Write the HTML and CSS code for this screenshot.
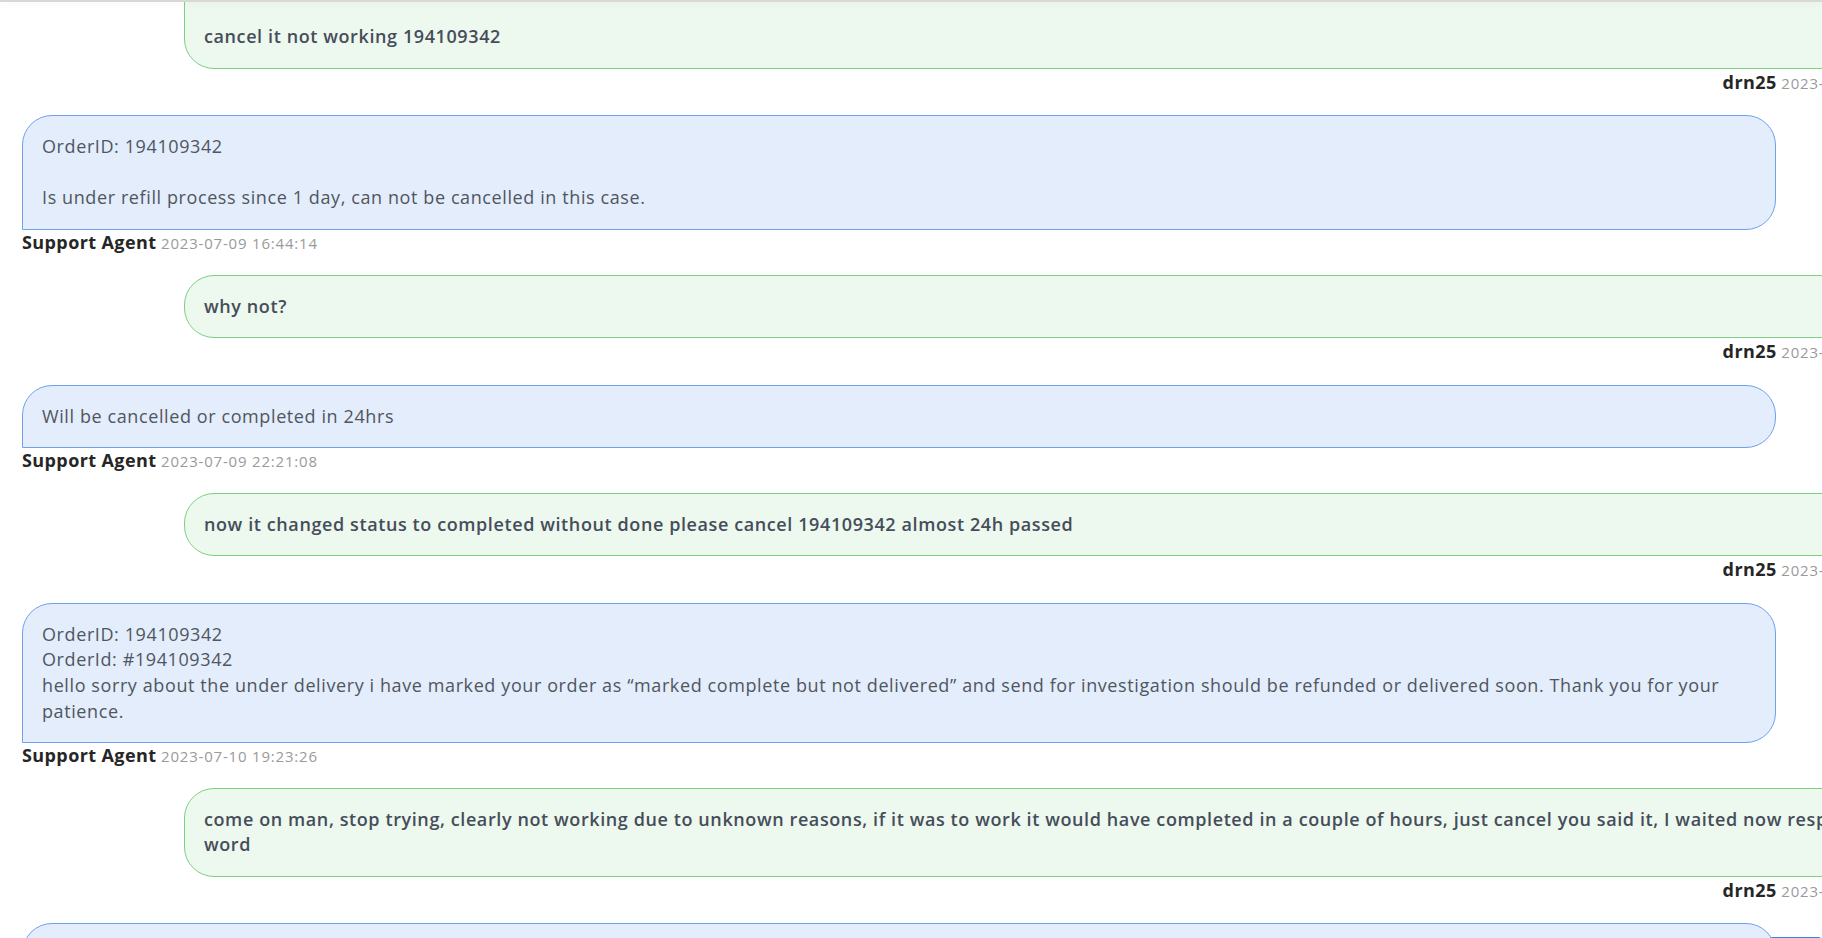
FILE: index.html
```html
<!DOCTYPE html>
<html lang="en">
<head>
<meta charset="utf-8">
<title>Ticket conversation</title>
<link rel="stylesheet" href="styles.css">
</head>
<body>
<div class="topbar"></div>
<main class="chat">
  <div class="msg out">
    <div class="bubble"><br><br>cancel it not working 194109342</div>
    <div class="meta"><b>drn25</b> <span>2023-07-09 16:30:12</span></div>
  </div>
  <div class="msg in">
    <div class="bubble">OrderID: 194109342<br><br>Is under refill process since 1 day, can not be cancelled in this case.</div>
    <div class="meta"><b>Support Agent</b> <span>2023-07-09 16:44:14</span></div>
  </div>
  <div class="msg out">
    <div class="bubble">why not?</div>
    <div class="meta"><b>drn25</b> <span>2023-07-09 16:51:37</span></div>
  </div>
  <div class="msg in">
    <div class="bubble">Will be cancelled or completed in 24hrs</div>
    <div class="meta"><b>Support Agent</b> <span>2023-07-09 22:21:08</span></div>
  </div>
  <div class="msg out">
    <div class="bubble">now it changed status to completed without done please cancel 194109342 almost 24h passed</div>
    <div class="meta"><b>drn25</b> <span>2023-07-10 18:02:44</span></div>
  </div>
  <div class="msg in">
    <div class="bubble">OrderID: 194109342<br>OrderId: #194109342<br>hello sorry about the under delivery i have marked your order as “marked complete but not delivered” and send for investigation should be refunded or delivered soon. Thank you for your patience.</div>
    <div class="meta"><b>Support Agent</b> <span>2023-07-10 19:23:26</span></div>
  </div>
  <div class="msg out">
    <div class="bubble">come on man, stop trying, clearly not working due to unknown reasons, if it was to work it would have completed in a couple of hours, just cancel you said it, I waited now respect your word</div>
    <div class="meta"><b>drn25</b> <span>2023-07-10 20:14:09</span></div>
  </div>
  <div class="msg in">
    <div class="bubble">OrderID: 194109342<br>Cancelled and refunded.</div>
    <div class="meta"><b>Support Agent</b> <span>2023-07-10 21:05:51</span></div>
  </div>
</main>
<div class="fab"></div>
</body>
</html>
```
FILE: styles.css
```css
html, body {
  margin: 0;
  padding: 0;
  background: #ffffff;
}
body {
  overflow: hidden;
  font-family: "Open Sans", "DejaVu Sans", sans-serif;
}
.topbar {
  position: fixed;
  top: 0;
  left: 0;
  right: 0;
  height: 2px;
  background: #d8d8d8;
  box-shadow: 0 2px 8px rgba(0, 0, 0, 0.07);
  z-index: 5;
}
.chat {
  display: flex;
  flex-direction: column;
  gap: 19.5px;
  width: 1754px;
  margin: -46px 0 0 22px;
}
.msg {
  display: flex;
  flex-direction: column;
}
.msg.out {
  width: 100%;
  margin-left: 162px;
}
.bubble {
  border: 1px solid;
  padding: 18px 19px;
  font-size: 18px;
  letter-spacing: 0.6px;
  line-height: 25.6px;
}
.in .bubble {
  background: #e3edfc;
  border-color: #6ea2ee;
  border-radius: 30px 30px 30px 0;
  color: #50565e;
}
.out .bubble {
  background: #edf8ee;
  border-color: #7bd183;
  border-radius: 30px 30px 0 30px;
  color: #464d5a;
  font-weight: 600;
}
.meta {
  height: 25px;
  font-size: 15px;
  line-height: 25px;
  letter-spacing: 0.8px;
  white-space: nowrap;
}
.out .meta {
  height: 27px;
  line-height: 27px;
  text-align: right;
}
.meta b {
  font-weight: 700;
  font-size: 18px;
  letter-spacing: 0.4px;
  color: #262626;
}
.meta span {
  color: #9a9a9a;
}
.fab {
  position: fixed;
  right: 0;
  bottom: -40px;
  width: 53px;
  height: 41px;
  background: #3d7fe0;
  border-radius: 4px;
}
```
